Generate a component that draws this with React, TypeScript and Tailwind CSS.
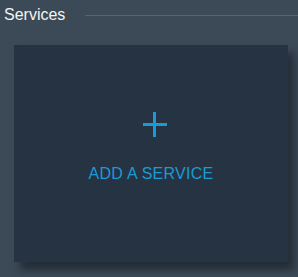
import React from "react";

const App = () => {
  return (
    <div className="h-[277px] w-[298px] overflow-hidden bg-[#3c4a57] font-['Liberation_Sans',Arial,sans-serif]">
      <div className="flex items-center gap-[20px] pl-[4px] pt-[4px]">
        <h2 className="text-[16px] leading-[22px] text-[#f2f4f6]">Services</h2>
        <div className="h-px flex-1 bg-[#56646f]" />
      </div>
      <div className="ml-[14px] mt-[19px] flex h-[217px] w-[274px] flex-col items-center bg-[#263342] shadow-[6px_8px_8px_rgba(15,22,30,0.55)]">
        <svg
          width="24"
          height="25"
          viewBox="0 0 24 25"
          className="ml-[7px] mt-[67px]"
          fill="#1a9bd7"
        >
          <rect x="10" y="0" width="3" height="25" />
          <rect x="0" y="11" width="24" height="3" />
        </svg>
        <span className="mt-[28px] text-[16px] leading-[18px] tracking-[0.25px] text-[#1a9bd7]">
          ADD A SERVICE
        </span>
      </div>
    </div>
  );
};

export default App;
